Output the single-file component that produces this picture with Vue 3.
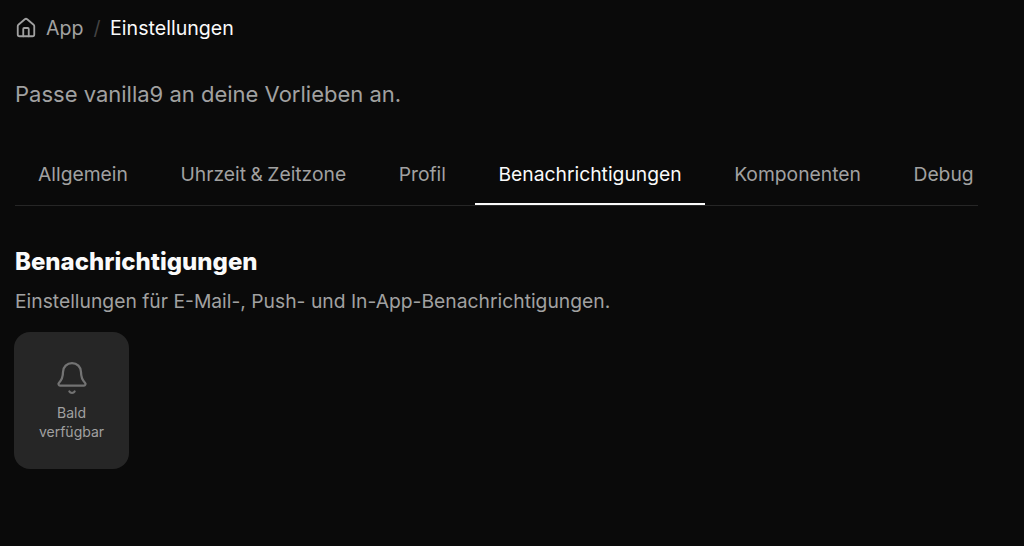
<template>
  <div class="page">
    <nav class="crumbs">
      <svg class="home" viewBox="0 0 24 24" width="22" height="22" fill="none" stroke="currentColor" stroke-width="2" stroke-linecap="round" stroke-linejoin="round">
        <path d="M15 21v-8a1 1 0 0 0-1-1h-4a1 1 0 0 0-1 1v8" />
        <path d="M3 10a2 2 0 0 1 .709-1.528l7-5.999a2 2 0 0 1 2.582 0l7 5.999A2 2 0 0 1 21 10v9a2 2 0 0 1-2 2H5a2 2 0 0 1-2-2z" />
      </svg>
      <span class="crumb">App</span>
      <span class="sep">/</span>
      <span class="current">Einstellungen</span>
    </nav>

    <p class="intro">Passe vanilla9 an deine Vorlieben an.</p>

    <div class="tabs">
      <div v-for="tab in tabs" :key="tab" class="tab" :class="{ active: tab === activeTab }">{{ tab }}</div>
    </div>

    <h2>Benachrichtigungen</h2>
    <p class="desc">Einstellungen für E-Mail-, Push- und In-App-Benachrichtigungen.</p>

    <div class="soon">
      <svg viewBox="0 0 24 24" width="36" height="36" fill="none" stroke="currentColor" stroke-width="1.5" stroke-linecap="round" stroke-linejoin="round">
        <path d="M10.268 21a2 2 0 0 0 3.464 0" />
        <path d="M3.262 15.326A1 1 0 0 0 4 17h16a1 1 0 0 0 .74-1.673C19.41 13.956 18 12.499 18 8A6 6 0 0 0 6 8c0 4.499-1.411 5.956-2.738 7.326" />
      </svg>
      <span>Bald<br />verfügbar</span>
    </div>
  </div>
</template>

<script setup>
const tabs = ["Allgemein", "Uhrzeit & Zeitzone", "Profil", "Benachrichtigungen", "Komponenten", "Debug"];
const activeTab = "Benachrichtigungen";
</script>

<style>
html,
body {
  background: #0a0a0a;
}
</style>

<style scoped>
.page {
  width: 978px;
  height: 546px;
  box-sizing: border-box;
  padding: 0 0 0 15px;
  font-family: Inter, "Liberation Sans", sans-serif;
  color: #a1a1a1;
  overflow: hidden;
}

.crumbs {
  display: flex;
  align-items: center;
  height: 22px;
  margin-top: 17px;
  font-size: 19.6px;
}

.home {
  color: #a1a1a1;
}

.crumb {
  margin-left: 9px;
}

.sep {
  margin: 0 9.5px 0 10px;
  color: #444;
}

.current {
  color: #fafafa;
}

.intro {
  margin: 41px 0 0;
  font-size: 22px;
  line-height: 28px;
}

.tabs {
  display: flex;
  gap: 6.5px;
  margin-top: 35px;
  border-bottom: 1px solid #262626;
}

.tab {
  flex: none;
  padding: 0 23px;
  height: 62px;
  line-height: 62px;
  font-size: 19.3px;
  word-spacing: -1px;
  white-space: nowrap;
}

.tab.active {
  color: #fafafa;
  box-shadow: inset 0 -2px 0 0 #fafafa;
}

h2 {
  margin: 40px 0 0;
  font-size: 24px;
  line-height: 32px;
  font-weight: 800;
  color: #fafafa;
}

.desc {
  margin: 11px 0 0;
  font-size: 19.3px;
  line-height: 24px;
}

.soon {
  display: flex;
  flex-direction: column;
  align-items: center;
  width: 115px;
  height: 137px;
  margin: 19px 0 0 -1px;
  padding-top: 28px;
  box-sizing: border-box;
  background: #262626;
  border-radius: 16px;
  text-align: center;
  font-size: 14px;
  line-height: 19px;
}

.soon svg {
  color: #737373;
}

.soon span {
  margin-top: 7px;
}
</style>
